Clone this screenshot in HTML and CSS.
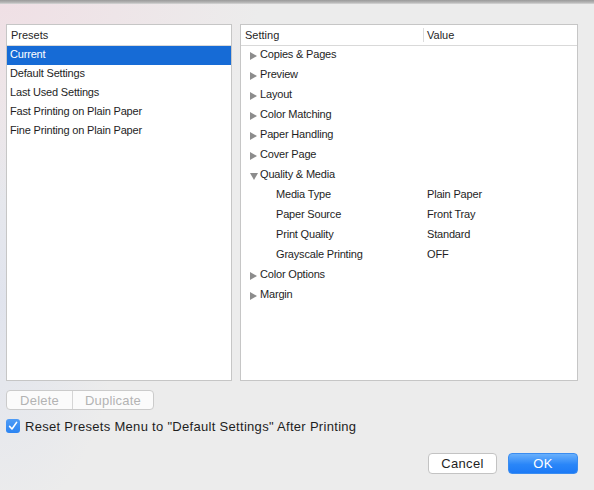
FILE: index.html
```html
<!DOCTYPE html>
<html>
<head>
<meta charset="utf-8">
<link rel="stylesheet" href="styles.css">
</head>
<body>
<div class="titlebar"></div>
<div class="content">
  <div class="panels">
    <div class="panel presets">
      <div class="header"><span class="hcell">Presets</span></div>
      <div class="prow selected">Current</div>
      <div class="prow">Default Settings</div>
      <div class="prow">Last Used Settings</div>
      <div class="prow">Fast Printing on Plain Paper</div>
      <div class="prow">Fine Printing on Plain Paper</div>
    </div>
    <div class="panel settings">
      <div class="header sgrid"><span class="hcell col1">Setting</span><span class="hcell col2">Value</span></div>
      <div class="srow sgrid"><span class="name"><i class="tri"></i>Copies &amp; Pages</span><span></span></div>
      <div class="srow sgrid"><span class="name"><i class="tri"></i>Preview</span><span></span></div>
      <div class="srow sgrid"><span class="name"><i class="tri"></i>Layout</span><span></span></div>
      <div class="srow sgrid"><span class="name"><i class="tri"></i>Color Matching</span><span></span></div>
      <div class="srow sgrid"><span class="name"><i class="tri"></i>Paper Handling</span><span></span></div>
      <div class="srow sgrid"><span class="name"><i class="tri"></i>Cover Page</span><span></span></div>
      <div class="srow sgrid"><span class="name"><i class="tri down"></i>Quality &amp; Media</span><span></span></div>
      <div class="srow sgrid"><span class="name child">Media Type</span><span class="val">Plain Paper</span></div>
      <div class="srow sgrid"><span class="name child">Paper Source</span><span class="val">Front Tray</span></div>
      <div class="srow sgrid"><span class="name child">Print Quality</span><span class="val">Standard</span></div>
      <div class="srow sgrid"><span class="name child">Grayscale Printing</span><span class="val">OFF</span></div>
      <div class="srow sgrid"><span class="name"><i class="tri"></i>Color Options</span><span></span></div>
      <div class="srow sgrid"><span class="name"><i class="tri"></i>Margin</span><span></span></div>
    </div>
  </div>
  <div class="seg">
    <span class="segbtn del">Delete</span><span class="segbtn dup">Duplicate</span>
  </div>
  <div class="check">
    <span class="box"><svg width="14" height="14" viewBox="0 0 14 14"><path d="M3.6 7.4 L6 10 L10.6 3.4" fill="none" stroke="#fff" stroke-width="1.6" stroke-linecap="round" stroke-linejoin="round"/></svg></span>
    <span class="checklabel">Reset Presets Menu to "Default Settings" After Printing</span>
  </div>
  <div class="actions">
    <span class="btn cancel">Cancel</span>
    <span class="btn ok">OK</span>
  </div>
</div>
</body>
</html>
```
FILE: styles.css
```css
html, body {
  margin: 0;
  padding: 0;
}
body {
  width: 594px;
  height: 490px;
  overflow: hidden;
  font-family: "Liberation Sans", Arial, sans-serif;
  color: #1e1e1e;
  background:
    radial-gradient(ellipse 260px 200px at 0px 0px, rgba(240, 222, 228, 0.9), rgba(236, 236, 236, 0) 100%),
    radial-gradient(ellipse 120px 220px at 0px 300px, rgba(222, 226, 238, 0.8), rgba(236, 236, 236, 0) 100%),
    #ececec;
}
.titlebar {
  height: 4px;
  background: linear-gradient(#9a9a9a, #b5b5b5 60%, #d8d8d8);
}
.content {
  display: flex;
  flex-direction: column;
  padding: 20px 16px 0 6px;
}
.panels {
  display: flex;
  gap: 8px;
  height: 357px;
}
.panel {
  background: #fff;
  border: 1px solid #c6c6c6;
  box-sizing: border-box;
  overflow: hidden;
}
.presets {
  width: 226px;
}
.settings {
  width: 338px;
}
.header {
  height: 21px;
  box-sizing: border-box;
  padding-bottom: 1px;
  border-bottom: 1px solid #d9d9d9;
  font-size: 11px;
  display: flex;
  align-items: center;
  color: #262626;
}
.presets .header .hcell {
  padding-left: 4px;
}
.prow {
  height: 19px;
  box-sizing: border-box;
  padding: 0 0 4px 3px;
  display: flex;
  align-items: center;
  font-size: 11px;
  letter-spacing: -0.18px;
}
.prow.selected {
  background: #166bd6;
  color: #fff;
}
.sgrid {
  display: grid;
  grid-template-columns: 182px 1fr;
}
.header.sgrid {
  display: grid;
  align-items: stretch;
  padding-bottom: 0;
}
.hcell.col1 {
  padding-left: 4px;
  padding-bottom: 1px;
  display: flex;
  align-items: center;
}
.hcell.col2 {
  border-left: 1px solid #dcdcdc;
  margin: 3px 0;
  padding-left: 3px;
  padding-bottom: 1px;
  display: flex;
  align-items: center;
}
.srow {
  height: 20px;
  box-sizing: border-box;
  padding-bottom: 5px;
  font-size: 11px;
  letter-spacing: -0.18px;
  align-items: center;
}
.name {
  display: flex;
  align-items: center;
  padding-left: 9px;
}
.name.child {
  padding-left: 35px;
}
.val {
  padding-left: 4px;
}
.tri {
  display: inline-block;
  width: 0;
  height: 0;
  border-top: 4px solid transparent;
  border-bottom: 4px solid transparent;
  border-left: 7px solid #8c8c8c;
  margin-right: 3px;
  margin-top: 5px;
}
.tri.down {
  border-left: 4px solid transparent;
  border-right: 4px solid transparent;
  border-top: 7px solid #8c8c8c;
  border-bottom: 0;
  margin-right: 2px;
  margin-top: 5px;
}
.seg {
  display: flex;
  margin-top: 9px;
  width: 148px;
  height: 20px;
  box-sizing: border-box;
  border: 1px solid #cbcbcb;
  border-radius: 4px;
  background: #fbfbfb;
}
.segbtn {
  display: flex;
  align-items: center;
  justify-content: center;
  font-size: 13px;
  letter-spacing: 0.2px;
  color: #b3b3b3;
}
.del {
  width: 65px;
  border-right: 1px solid #d6d6d6;
}
.dup {
  flex: 1;
}
.check {
  display: flex;
  align-items: center;
  margin-top: 9px;
  height: 14px;
}
.box {
  width: 14px;
  height: 14px;
  border-radius: 3px;
  background: linear-gradient(#4f9cf6, #2b84f2);
  display: flex;
  flex: none;
}
.checklabel {
  font-size: 13px;
  letter-spacing: 0.3px;
  margin-left: 5px;
  color: #1e1e1e;
}
.actions {
  display: flex;
  justify-content: flex-end;
  gap: 11px;
  margin-top: 20px;
}
.btn {
  height: 21px;
  box-sizing: border-box;
  border-radius: 4px;
  display: flex;
  align-items: center;
  justify-content: center;
  font-size: 13px;
  letter-spacing: 0.3px;
}
.cancel {
  width: 69px;
  background: #fff;
  border: 1px solid #c3c3c3;
  color: #1e1e1e;
}
.ok {
  width: 70px;
  background: linear-gradient(#69b0fc, #2a86f8 55%, #1c7af6);
  border: 1px solid #3a8cf0;
  color: #fff;
}
```
